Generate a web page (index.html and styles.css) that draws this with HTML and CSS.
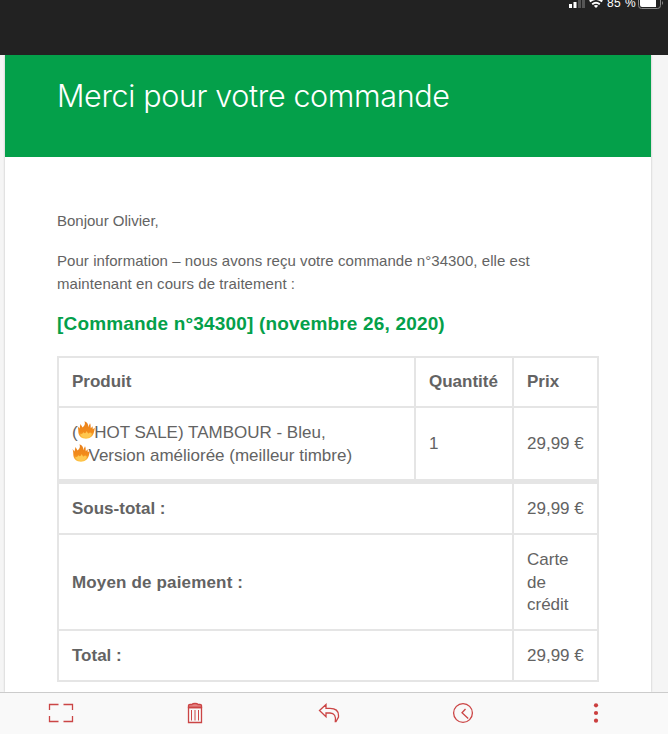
FILE: index.html
```html
<!DOCTYPE html>
<html lang="fr">
<head>
<meta charset="utf-8">
<title>Merci pour votre commande</title>
<link rel="stylesheet" href="styles.css">
</head>
<body>
<svg class="defs" width="0" height="0" aria-hidden="true">
  <defs>
    <linearGradient id="flame" x1="0" y1="0" x2="0" y2="1">
      <stop offset="0" stop-color="#e8801c"/><stop offset=".62" stop-color="#f38c1b"/><stop offset="1" stop-color="#ffc84b"/>
    </linearGradient>
    <symbol id="fire" viewBox="0 0 18 18">
      <path fill="url(#flame)" d="M.5 5 2.500 7.500 3.500 3 5.500 6.500 7 5C8.200 3.500 8 2 7.500.3c3 1.200 4.200 3.500 3.700 6l1.800-4c.8 1.400.6 3 .8 5l1.800-2 .2 3 2-1.500c-.3 2-.5 3.500-1 5C15.800 15.500 13 17.700 9 17.700c-4.400 0-7.300-2.600-7.600-6.200C1.200 9.500 1.500 8 .5 5Z"/>
      <path fill="#ffc850" d="M3 13c1.600.7 2.900-.4 3.700-2 .4 1.300.9 1.700 1.700 1.100.7-.5 1-1.100 1.200-2 .9.800.8 2.100 1.600 2.300.9.300 1.500-.5 2-1.300.2 1.600 1.200 1.700 2 .8-.8 3.300-3 4.800-6 4.800-3.100 0-5.200-1.400-6.200-3.700Z"/>
    </symbol>
  </defs>
</svg>
<div class="screen">
  <header class="status">
    <svg class="signal" width="18" height="9" viewBox="0 0 18 9"><path fill="#fff" d="M0 4h3v4H0zM4.500 2h3v6h-3z"/><path fill="#555" d="M9 0h3v8H9zM13 0h3v8h-3z"/></svg>
    <svg class="wifi" width="14" height="9" viewBox="0 0 14 9" fill="none" stroke="#fff" stroke-width="2"><path d="M.7 1.400Q7-3.500 13.300 1.400M3.200 4.200Q7 1.200 10.800 4.200"/><path fill="#fff" stroke="none" d="M4.800 5.700Q7 4.200 9.200 5.700L7 8Z"/></svg>
    <span class="percent">85 %</span>
    <svg class="battery" width="27" height="10" viewBox="0 0 27 10"><path fill="none" stroke="#8a8a8a" d="M.5-2V5.500Q.5 8.500 3.500 8.500H19.500Q22.500 8.500 22.500 5.500V-2"/><path fill="#fff" d="M2 0H18V7H4Q2 7 2 5Z"/><path fill="#8a8a8a" d="M24 1q2 2 0 4Z"/></svg>
  </header>
  <main class="viewport">
    <article class="mail">
      <div class="banner"><h1>Merci pour votre commande</h1></div>
      <div class="body">
        <p class="hello">Bonjour Olivier,</p>
        <p class="info">Pour information – nous avons reçu votre commande n°34300, elle est<br>maintenant en cours de traitement :</p>
        <h2>[Commande n°34300] (novembre 26, 2020)</h2>
        <div class="order">
          <div class="cell head top"><span>Produit</span></div>
          <div class="cell head top"><span>Quantité</span></div>
          <div class="cell head top"><span>Prix</span></div>
          <div class="cell item"><span>(<svg class="fire"><use href="#fire"/></svg>HOT SALE) TAMBOUR - Bleu,<br><svg class="fire"><use href="#fire"/></svg>Version améliorée (meilleur timbre)</span></div>
          <div class="cell"><span>1</span></div>
          <div class="cell"><span>29,99 €</span></div>
          <div class="cell head wide first"><span>Sous-total :</span></div>
          <div class="cell first"><span>29,99 €</span></div>
          <div class="cell head wide pay"><span>Moyen de paiement :</span></div>
          <div class="cell"><span>Carte<br>de<br>crédit</span></div>
          <div class="cell head wide"><span>Total :</span></div>
          <div class="cell"><span>29,99 €</span></div>
        </div>
      </div>
    </article>
  </main>
  <nav class="toolbar">
    <svg width="26" height="20" viewBox="0 0 26 20"><path d="M1.500 7V1.500H10.500M15.500 1.500H24.500V7M24.500 13V18.500H15.500M10.500 18.500H1.500V13"/></svg>
    <svg width="16" height="22" viewBox="0 0 16 22"><path class="lid" d="M1.500 5.500V3.500Q1.500 2.500 3 2.500H5Q5.500 1.500 8 1.500T11 2.500H13Q14.500 2.500 14.500 3.500V5.500Z"/><path d="M1.500 5.500H14.500V20.500H1.500Z"/><path class="thin" d="M4.500 8V18.500M8 8V18.500M11.500 8V18.500"/></svg>
    <svg width="22" height="20" viewBox="0 0 22 20"><path d="M1.500 7.500 8 1.500V5.300H12Q20.500 5.300 20.500 12.500V14L18 18.500H17.300Q18.500 10.300 12 10H8V13.700Z"/></svg>
    <svg width="22" height="22" viewBox="0 0 22 22"><circle cx="11" cy="11" r="9.400"/><path d="M13.500 7 10 10.700 16.200 16.500"/></svg>
    <svg width="8" height="22" viewBox="0 0 8 22"><g class="dots"><circle cx="4" cy="3.300" r="2.100"/><circle cx="4" cy="11" r="2.100"/><circle cx="4" cy="18.700" r="2.100"/></g></svg>
  </nav>
</div>
</body>
</html>
```
FILE: styles.css
```css
* { box-sizing: border-box; }
body { margin: 0; font-family: "Liberation Sans", Arial, sans-serif; color: #636363; }
.defs { display: block; }
.screen { width: 668px; height: 734px; display: flex; flex-direction: column; overflow: hidden; }
.status { height: 55px; flex: none; background: #222; display: flex; align-items: flex-start; padding-left: 569px; color: #fff; }
.status svg { flex: none; }
.wifi { margin-left: 2px; }
.percent { flex: none; width: 31px; margin: -3px 0 0 4px; font-size: 12px; line-height: 13px; letter-spacing: .4px; white-space: nowrap; }
.battery { margin-left: 0; }
.viewport { flex: 1; min-height: 0; overflow: hidden; background: #f5f5f5; padding: 0 17px 0 5px; }
.mail { height: 100%; background: #fff; box-shadow: 0 0 2px #bbb; }
.banner { height: 102px; background: #04a04a; padding: 21px 52px; }
h1 { margin: 0; font: 300 30.500px/40px Inter, sans-serif; letter-spacing: -.36px; color: #fff; white-space: nowrap; }
.body { padding: 52px 52px 0; white-space: nowrap; }
p { margin: 0; font-size: 15px; line-height: 23px; }
.info { margin-top: 17px; letter-spacing: .06px; }
h2 { margin: 17px 0 0; font-size: 19px; line-height: 24px; letter-spacing: .17px; color: #04a04a; }
.order { margin-top: 20px; width: 542px; display: grid; grid-template-columns: 355px 96px 83px; grid-template-rows: 48px 71px 52px 94px 49px; gap: 2px; padding: 2px; background: #e5e5e5; }
.cell { background: #fff; display: flex; align-items: center; padding: 2px 0 0 13px; font-size: 17px; line-height: 22.600px; }
.head { font-weight: 700; }
.top { padding-top: 0; }
.wide { grid-column: span 2; }
.first { margin-top: 3px; }
.pay { letter-spacing: .16px; }
.fire { width: 18px; height: 18px; margin: 0 -1px 0 -.5px; vertical-align: -1px; }
.item { padding-top: 0; line-height: 23px; }
.toolbar { height: 42px; flex: none; border-top: 1px solid #ccc; background: #f9f9f9; display: grid; grid-template-columns: 139px 131px 134px 140px auto; align-items: center; padding: 0 0 1px 48px; }
.toolbar svg { fill: none; stroke: #cb4545; stroke-width: 1.300; }
.toolbar .lid { fill: #e58585; }
.toolbar .thin { stroke-width: 1; }
.toolbar .dots { fill: #cb3f3f; stroke: none; }
```
